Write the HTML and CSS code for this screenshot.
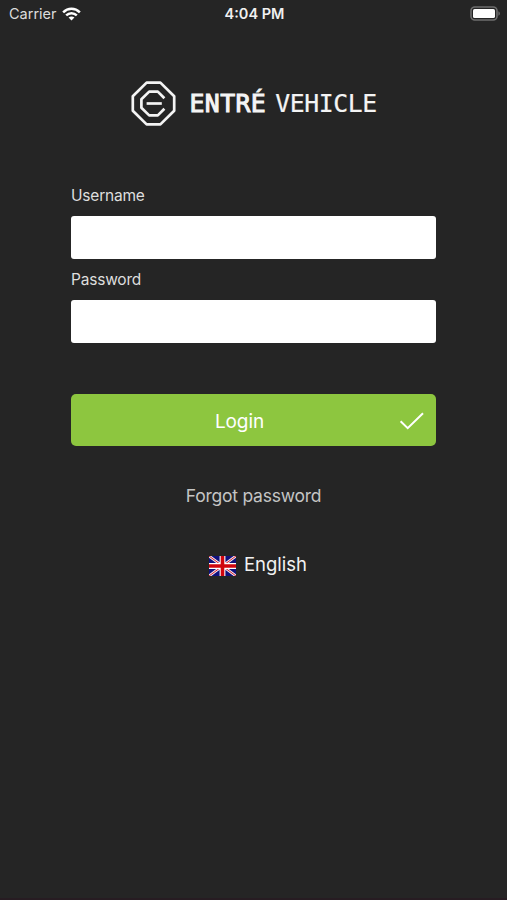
FILE: index.html
```html
<!DOCTYPE html>
<html lang="en">

<head>
    <meta charset="UTF-8">
    <meta name="viewport" content="width=device-width, initial-scale=1.0">
    <title>Entré Vehicle</title>
    <link rel="stylesheet" href="styles.css">
</head>

<body>
    <div class="screen">
        <!-- status bar -->
        <div class="status">
            <div class="carrier">
                <span class="carrier-name">Carrier</span>
                <svg class="wifi" width="19" height="14" viewBox="0 0 20 14">
                    <g fill="none" stroke="#fff" stroke-width="2.6">
                        <path d="M1.2 5.2C6.2 .3 13.8 .3 18.8 5.2" />
                        <path d="M4.4 8.5C7.6 5.4 12.4 5.4 15.6 8.5" />
                    </g>
                    <path d="M6.9 10.7C8.7 9.1 11.3 9.1 13.1 10.7L10 13.8Z" fill="#fff" />
                </svg>
            </div>
            <div class="time">4:04 PM</div>
            <svg class="battery" width="30" height="15" viewBox="0 0 30 15">
                <rect x="1" y="1" width="26" height="13" rx="3.8" fill="none" stroke="#6e6e6e" stroke-width="1.6" />
                <rect x="3" y="3" width="22" height="9" rx="1.6" fill="#fff" />
                <path d="M28.4 5.2C30.4 6.2 30.4 8.8 28.4 9.8Z" fill="#6e6e6e" />
            </svg>
        </div>

        <!-- logo -->
        <div class="logo">
            <svg class="logo-mark" width="45" height="45" viewBox="0 0 45 45" fill="none" stroke="#f4f4f4" stroke-width="2.7" stroke-linejoin="round">
                <path d="M15.6 1.6H29.4L43.2 15.2V29.8L29.4 43.4H15.6L1.8 29.8V15.2Z" />
                <path d="M33.4 17.2L26.8 10.6H18.2L10.4 18.2V26.8L18.2 34.4H26.8L33.4 27.8" />
                <path d="M15.6 22.5H30.8" />
            </svg>
            <div class="logo-text"><span class="bold">ENTRÉ</span><span class="light">VEHICLE</span></div>
        </div>

        <form class="login">
            <label class="label" for="username">Username</label>
            <input class="field" id="username" type="text">
            <label class="label" for="password">Password</label>
            <input class="field" id="password" type="password">
            <button class="btn" type="button">
                <span class="btn-text">Login</span>
                <svg class="check" width="26" height="20" viewBox="0 0 26 20">
                    <path d="M1.6 10.2L8.7 17.1L24 2.2" fill="none" stroke="#fff" stroke-width="2" />
                </svg>
            </button>
        </form>

        <a class="forgot">Forgot password</a>

        <div class="lang">
            <svg class="flag" width="27" height="20" viewBox="0 0 27 20">
                <rect width="27" height="20" fill="#10107c" />
                <path d="M0 0L27 20M27 0L0 20" stroke="#f0e4ee" stroke-width="2.8" />
                <path d="M0 0L27 20M27 0L0 20" stroke="#d8202c" stroke-width="1" />
                <path d="M13.5 0V20M0 10H27" stroke="#fff" stroke-width="5.8" />
                <path d="M13.5 0V20M0 10H27" stroke="#d0050e" stroke-width="3.6" />
            </svg>
            <span class="lang-name">English</span>
        </div>
    </div>
</body>

</html>
```
FILE: styles.css
```css
* {
    margin: 0;
    padding: 0;
    box-sizing: border-box;
}

body {
    background-color: #252525;
    font-family: Inter, "Liberation Sans", sans-serif;
    color: #fff;
}

.screen {
    display: flex;
    flex-direction: column;
    align-items: center;
    width: 507px;
    height: 900px;
    border-bottom: 2px solid #271c22;
}

.status {
    display: grid;
    grid-template-columns: 1fr auto 1fr;
    align-items: center;
    width: 100%;
    height: 27px;
    padding: 0 7px 0 9px;
}

.carrier {
    display: flex;
    align-items: center;
    gap: 5px;
}

.carrier-name {
    font-size: 14.5px;
    color: #dcdcdc;
}

.time {
    font-size: 14.5px;
    font-weight: 600;
    color: #f0f0f0;
}

.battery {
    justify-self: end;
}

.logo {
    display: flex;
    align-items: center;
    gap: 14px;
    width: 246px;
    height: 45px;
    margin-top: 54px;
}

.logo-mark {
    flex: none;
}

.logo-text {
    display: flex;
    gap: 9px;
    font-family: "DejaVu Sans Mono", monospace;
    font-size: 24.8px;
    line-height: 45px;
    color: #f4f4f4;
}

.bold {
    letter-spacing: 0.4px;
    -webkit-text-stroke: 1px #f4f4f4;
}

.light {
    letter-spacing: -0.4px;
    -webkit-text-stroke: 0.2px #f4f4f4;
}

.login {
    display: flex;
    flex-direction: column;
    width: 365px;
    margin-top: 58px;
}

.label {
    height: 32px;
    line-height: 23px;
    font-size: 15.5px;
    letter-spacing: -0.2px;
    color: #dedede;
}

.field {
    height: 43px;
    margin-bottom: 9.4px;
    border: 0;
    border-radius: 3px;
    background-color: #fff;
}

.btn {
    display: flex;
    align-items: center;
    height: 52px;
    margin-top: 41.6px;
    padding: 1px 11px 0 0;
    border: 0;
    border-radius: 5px;
    background-color: #8dc63f;
    font-family: inherit;
    color: #fff;
}

.btn-text {
    flex: 1;
    padding: 1px 0 0 9px;
    font-size: 19px;
    letter-spacing: -0.1px;
}

.forgot {
    margin-top: 36.8px;
    line-height: 25px;
    font-size: 17.5px;
    letter-spacing: -0.24px;
    color: #c4c4c4;
}

.lang {
    display: flex;
    align-items: center;
    gap: 8px;
    margin-top: 43px;
    padding-left: 9px;
}

.flag {
    margin-top: 3px;
}

.lang-name {
    line-height: 26px;
    font-size: 18.5px;
    color: #f2f2f2;
}
```
